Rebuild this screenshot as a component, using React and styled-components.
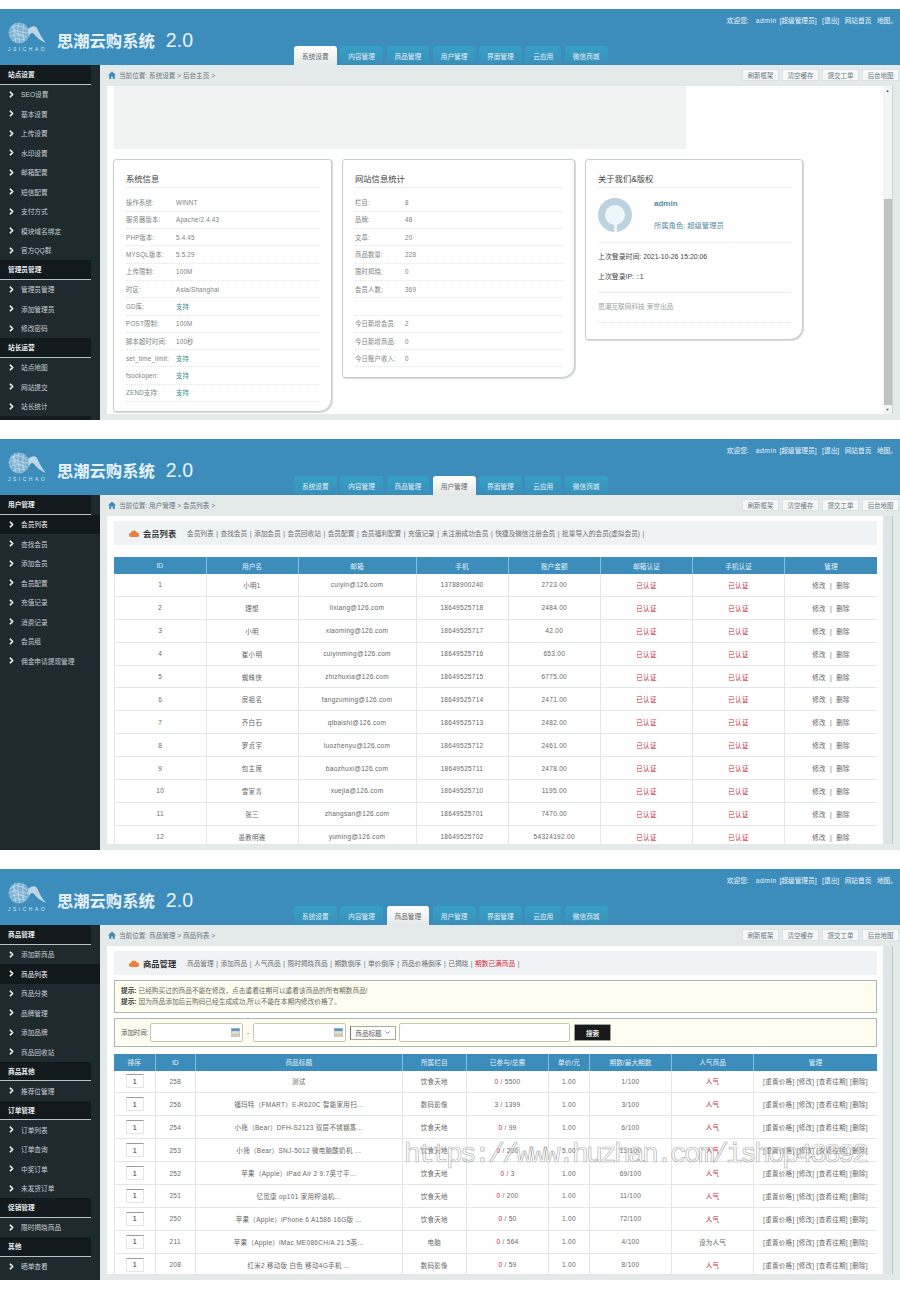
import React from 'react';
import styled, {createGlobalStyle} from 'styled-components';
import {ChevronRight, ChevronDown} from 'lucide-react';

const TABS = ['系统设置', '内容管理', '商品管理', '用户管理', '界面管理', '云应用', '微信商城'];

const SIDE_ONE = [
    {group: '站点设置', items: ['SEO设置', '基本设置', '上传设置', '水印设置', '邮箱配置', '短信配置', '支付方式', '模块域名绑定', '官方QQ群']},
    {group: '管理员管理', items: ['管理员管理', '添加管理员', '修改密码']},
    {group: '站长运营', items: ['站点地图', '网站提交', '站长统计']},
    {group: '', items: []},
];

const SIDE_TWO = [
    {group: '用户管理', items: ['会员列表', '查找会员', '添加会员', '会员配置', '充值记录', '消费记录', '会员组', '佣金申请提现管理']},
];

const SIDE_THREE = [
    {group: '商品管理', items: ['添加新商品', '商品列表', '商品分类', '品牌管理', '添加品牌', '商品回收站']},
    {group: '商品其他', items: ['推荐位管理']},
    {group: '订单管理', items: ['订单列表', '订单查询', '中奖订单', '未发货订单']},
    {group: '促销管理', items: ['限时揭晓商品']},
    {group: '其他', items: ['晒单查看']},
];

const SYSTEM_INFO = [
    ['操作系统:', 'WINNT'],
    ['服务器版本:', 'Apache/2.4.43'],
    ['PHP版本:', '5.4.45'],
    ['MYSQL版本:', '5.5.29'],
    ['上传限制:', '100M'],
    ['时区:', 'Asia/Shanghai'],
    ['GD库:', '支持', true],
    ['POST限制:', '100M'],
    ['脚本超时时间:', '100秒'],
    ['set_time_limit:', '支持', true],
    ['fsockopen:', '支持', true],
    ['ZEND支持:', '支持', true],
];

const SITE_STATS = [
    ['栏目:', '8'],
    ['品牌:', '48'],
    ['文章:', '20'],
    ['商品数量:', '228'],
    ['限时揭晓:', '0'],
    ['会员人数:', '369'],
    ['', ''],
    ['今日新增会员:', '2'],
    ['今日新增商品:', '0'],
    ['今日账户收入:', '0'],
];

const MEMBERS = [
    [1, '小明1', 'cuiyin@126.com', '13788900240', '2723.00'],
    [2, '理想', 'lixiang@126.com', '18649525718', '2484.00'],
    [3, '小明', 'xiaoming@126.com', '18649525717', '42.00'],
    [4, '崔小明', 'cuiyinming@126.com', '18649525716', '653.00'],
    [5, '蜘蛛侠', 'zhizhuxia@126.com', '18649525715', '6775.00'],
    [6, '房祖名', 'fangzuming@126.com', '18649525714', '2471.00'],
    [7, '齐白石', 'qibaishi@126.com', '18649525713', '2482.00'],
    [8, '罗贞宇', 'luozhenyu@126.com', '18649525712', '2461.00'],
    [9, '包主席', 'baozhuxi@126.com', '18649525711', '2478.00'],
    [10, '雪家青', 'xuejia@126.com', '18649525710', '1195.00'],
    [11, '张三', 'zhangsan@126.com', '18649525701', '7470.00'],
    [12, '愚教明雅', 'yuming@126.com', '18649525702', '54324192.00'],
];

const PRODUCTS = [
    [258, '测试', '饮食天地', '0', '5500', '1.00', '1/100', true],
    [256, '福玛特（FMART）E-R620C 智能家用扫...', '数码影像', '3', '1399', '1.00', '3/100', true],
    [254, '小熊（Bear）DFH-S2123 双层不锈钢蒸...', '饮食天地', '0', '99', '1.00', '6/100', true],
    [253, '小熊（Bear）SNJ-5012 微电脑酸奶机 ...', '饮食天地', '0', '200', '5.00', '13/100', true],
    [252, '苹果（Apple）iPad Air 2 9.7英寸平...', '饮食天地', '0', '3', '1.00', '69/100', true],
    [251, '亿觅康 op101 家用榨油机...', '饮食天地', '0', '200', '1.00', '11/100', true],
    [250, '苹果（Apple）iPhone 6 A1586 16G版 ...', '饮食天地', '0', '50', '1.00', '72/100', true],
    [211, '苹果（Apple）iMac ME086CH/A 21.5英...', '电脑', '0', '564', '1.00', '4/100', false],
    [208, '红米2 移动版 白色 移动4G手机 ...', '数码影像', '0', '59', '1.00', '8/100', true],
];

const MEMBER_COLS = '91.5px 92px 118px 92px 92.5px 92px 92px 93px';
const PRODUCT_COLS = '40.5px 40.5px 206.5px 64.5px 82px 41px 82px 82px 124px';

const MEMBER_LINKS = ['会员列表', '查找会员', '添加会员', '会员回收站', '会员配置', '会员福利配置', '充值记录', '未注册成功会员', '快捷及微信注册会员', '批量导入的会员(虚拟会员)'];
const PRODUCT_LINKS = ['商品管理', '添加商品', '人气商品', '限时揭晓商品', '期数倒序', '单价倒序', '商品价格倒序', '已揭晓'];

function Logo() {
    return (
        <LogoWrap>
            <LogoMark width="40" height="24" viewBox="0 0 40 24" fill="none">
                <circle cx="11" cy="11" r="10.5" fill="#7fb2d2" />
                <g stroke="#e3f0f7" strokeWidth="0.5">
                    <path d="M2 7c3-3 6-4 9-3s6 2 8 4" />
                    <path d="M1 11c3-2 6-3 9-2s7 2 11 2" />
                    <path d="M2 15c3-2 5-2 8-2s6 1 9 2" />
                    <path d="M5 19c2-2 4-3 6-2s4 1 6 0" />
                    <path d="M7 1c-2 5-1 12 1 19" />
                    <path d="M11 1c-2 5-1 12 1 20" />
                    <path d="M16 2c-2 5-1 11 0 17" />
                    <path d="M4 4c2 2 3 3 3 5s2 3 4 3 4 2 4 4" />
                </g>
                <path d="M20 7C23 4 27 3 29 6 31 10 33 15 38 21 33 19 29 16 26 12 24 10 22 11 21 15z" fill="#bcd8e8" />
            </LogoMark>
            <LogoName>JSICHAO</LogoName>
        </LogoWrap>
    );
}

function Header({active}) {
    return (
        <Top>
            <Logo />
            <Title>思潮云购系统<TitleVersion>2.0</TitleVersion></Title>
            <TopRight>
                <TopLinks>
                    <span>欢迎您:</span>
                    <TopUser>admin</TopUser>
                    <span>[超级管理员]</span>
                    <span>[退出]</span>
                    <span>网站首页</span>
                    <span>地图。</span>
                </TopLinks>
                <Tabs>
                    {TABS.map((t) => <Tab key={t} $active={t === active}>{t}</Tab>)}
                </Tabs>
            </TopRight>
        </Top>
    );
}

function Sidebar({groups, current}) {
    return (
        <Side>
            {groups.map((g, i) => (
                <div key={i}>
                    <SideGroup>{g.group}</SideGroup>
                    {g.items.map((item) => (
                        <SideItem key={item} $active={item === current}>
                            <ChevronRight size={9} strokeWidth={4.5} color="#fff" />
                            {item}
                        </SideItem>
                    ))}
                </div>
            ))}
        </Side>
    );
}

function SubBar({crumbs}) {
    return (
        <Sub>
            <Crumbs>
                <svg width="8" height="8" viewBox="0 0 8 8"><path d="M4 .5 0 4.2h1.2V8h2V5.4h1.6V8h2V4.2H8z" fill="#3c8dbc" /></svg>
                当前位置: {crumbs}
            </Crumbs>
            <SubButtons>
                {['刷新框架', '清空缓存', '提交工单', '后台地图'].map((b) => <SubButton key={b}>{b}</SubButton>)}
            </SubButtons>
        </Sub>
    );
}

function Cloud() {
    return (
        <svg width="10" height="7" viewBox="0 0 10 7"><path d="M2.2 7A2.1 2.1 0 0 1 1.9 2.8 3.2 3.2 0 0 1 7.9 2.6 2.2 2.2 0 0 1 7.9 7z" fill="#e9803c" /></svg>
    );
}

function Toolbar({title, links, extra}) {
    return (
        <Bar>
            <Cloud />
            <BarTitle>{title}</BarTitle>
            <BarLinks>
                {links.map((l) => <span key={l}>{l}<BarSep>|</BarSep></span>)}
                {extra}
            </BarLinks>
        </Bar>
    );
}

function Scrollbar({light, thumbTop, thumbHeight}) {
    return (
        <Track $light={light}>
            {light && <Arrow>▲</Arrow>}
            {light && <Thumb $top={thumbTop} $height={thumbHeight} />}
            {light && <Arrow>▼</Arrow>}
        </Track>
    );
}

function InfoRows({rows}) {
    return rows.map(([label, value, ok], i) => (
        <InfoRow key={i}>
            <InfoLabel>{label}</InfoLabel>
            <InfoValue $ok={ok}>{value}</InfoValue>
        </InfoRow>
    ));
}

function DashboardScreen() {
    return (
        <Screen>
            <Header active="系统设置" />
            <Body>
                <Sidebar groups={SIDE_ONE} />
                <Main>
                    <SubBar crumbs="系统设置 > 后台主页 >" />
                    <Panel>
                        <Inner $flush>
                            <Blank />
                            <Cards>
                                <Card $width={219} $height={253}>
                                    <CardTitle>系统信息</CardTitle>
                                    <InfoRows rows={SYSTEM_INFO} />
                                </Card>
                                <Card $width={233} $height={219}>
                                    <CardTitle>网站信息统计</CardTitle>
                                    <InfoRows rows={SITE_STATS} />
                                </Card>
                                <Card $width={218} $height={181}>
                                    <CardTitle>关于我们&版权</CardTitle>
                                    <Profile>
                                        <Avatar />
                                        <ProfileText>
                                            <ProfileName>admin</ProfileName>
                                            <ProfileRole>所属角色: 超级管理员</ProfileRole>
                                        </ProfileText>
                                    </Profile>
                                    <LoginInfo>
                                        <div>上次登录时间: 2021-10-26 15:20:06</div>
                                        <div>上次登录IP: ::1</div>
                                    </LoginInfo>
                                    <Credit>思潮互联网科技 荣誉出品</Credit>
                                </Card>
                            </Cards>
                        </Inner>
                        <Scrollbar light thumbTop={104} thumbHeight={206} />
                    </Panel>
                </Main>
            </Body>
        </Screen>
    );
}

function MemberScreen() {
    return (
        <Screen>
            <Header active="用户管理" />
            <Body>
                <Sidebar groups={SIDE_TWO} current="会员列表" />
                <Main>
                    <SubBar crumbs="用户管理 > 会员列表 >" />
                    <Panel>
                        <Inner>
                            <Toolbar title="会员列表" links={MEMBER_LINKS} />
                            <TableHead $cols={MEMBER_COLS} $gap={12}>
                                {['ID', '用户名', '邮箱', '手机', '账户金额', '邮箱认证', '手机认证', '管理'].map((h) => <HeadCell key={h}>{h}</HeadCell>)}
                            </TableHead>
                            {MEMBERS.map((m) => (
                                <TableRow key={m[0]} $cols={MEMBER_COLS}>
                                    {m.map((v, i) => <Cell key={i}>{v}</Cell>)}
                                    <Cell $red>已认证</Cell>
                                    <Cell $red>已认证</Cell>
                                    <Cell>修改&nbsp;&nbsp;|&nbsp;&nbsp;删除</Cell>
                                </TableRow>
                            ))}
                        </Inner>
                        <Scrollbar />
                    </Panel>
                </Main>
            </Body>
        </Screen>
    );
}

function DateField() {
    return (
        <DateBox>
            <svg width="9" height="9" viewBox="0 0 9 9">
                <rect width="9" height="9" fill="#d8e4ea" stroke="#7f97a6" strokeWidth=".6" />
                <rect x=".5" y=".5" width="8" height="2.6" fill="#5d95bd" />
                <rect x="1" y="5.6" width="7" height="2.6" fill="#e2c98c" />
            </svg>
        </DateBox>
    );
}

function ProductScreen() {
    return (
        <Screen>
            <Header active="商品管理" />
            <Body>
                <Sidebar groups={SIDE_THREE} current="商品列表" />
                <Main>
                    <SubBar crumbs="商品管理 > 商品列表 >" />
                    <Panel>
                        <Inner>
                            <Toolbar title="商品管理" links={PRODUCT_LINKS} extra={<span><RedText>期数已满商品</RedText><BarSep>|</BarSep></span>} />
                            <Notice>
                                <div><b>提示:</b> 已经购买过的商品不能在修改，点击重看往期可以重看该商品的所有期数商品!</div>
                                <div><b>提示:</b> 因为商品添加后云购码已经生成成功,所以不能在本期内修改价格了。</div>
                            </Notice>
                            <SearchBox>
                                <SearchLabel>添加时间:</SearchLabel>
                                <DateField />
                                <DateDash>-</DateDash>
                                <DateField />
                                <FieldSelect>
                                    商品标题
                                    <ChevronDown size={7} strokeWidth={2.5} />
                                </FieldSelect>
                                <FieldInput readOnly />
                                <SearchButton>搜索</SearchButton>
                            </SearchBox>
                            <TableHead $cols={PRODUCT_COLS} $gap={6.5}>
                                {['排序', 'ID', '商品标题', '所属栏目', '已参与/总需', '单价/元', '期数/最大期数', '人气商品', '管理'].map((h) => <HeadCell key={h}>{h}</HeadCell>)}
                            </TableHead>
                            {PRODUCTS.map((p) => (
                                <TableRow key={p[0]} $cols={PRODUCT_COLS}>
                                    <Cell><OrderInput readOnly value="1" /></Cell>
                                    <Cell>{p[0]}</Cell>
                                    <Cell>{p[1]}</Cell>
                                    <Cell>{p[2]}</Cell>
                                    <Cell>{p[3] === '0' ? <RedText>{p[3]}</RedText> : p[3]} / {p[4]}</Cell>
                                    <Cell>{p[5]}</Cell>
                                    <Cell>{p[6]}</Cell>
                                    <Cell $red={p[7]}>{p[7] ? '人气' : '设为人气'}</Cell>
                                    <Cell>[重置价格] [修改] [查看往期] [删除]</Cell>
                                </TableRow>
                            ))}
                        </Inner>
                        <Scrollbar />
                    </Panel>
                </Main>
            </Body>
        </Screen>
    );
}

export default function App() {
    return (
        <Page>
            <GlobalStyle />
            <DashboardScreen />
            <MemberScreen />
            <ProductScreen />
            <Watermark>https://www.huzhan.com/ishop43892</Watermark>
        </Page>
    );
}

const GlobalStyle = createGlobalStyle`
    html, body {
        margin: 0;
        padding: 0;
        background: #fff;
    }
    * {
        box-sizing: border-box;
    }
`;

const Page = styled.div`
    position: relative;
    width: 900px;
    height: 1290px;
    padding-top: 9px;
    display: flex;
    flex-direction: column;
    gap: 19px;
    overflow: hidden;
    font-family: "Liberation Sans", "Noto Sans CJK SC", sans-serif;
    font-size: 6.7px;
    color: #555;
`;

const Watermark = styled.div`
    position: absolute;
    left: 404px;
    top: 1139px;
    font-family: "Liberation Mono", monospace;
    font-size: 28px;
    letter-spacing: -2.8px;
    white-space: nowrap;
    color: rgba(255, 255, 255, 0.5);
    -webkit-text-stroke: 0.7px rgba(120, 120, 120, 0.6);
`;

const Screen = styled.section`
    height: 411px;
    display: flex;
    flex-direction: column;
    overflow: hidden;
`;

const Top = styled.header`
    height: 56px;
    flex: none;
    display: flex;
    background: #3c8dbc;
    color: #fff;
`;

const LogoWrap = styled.div`
    width: 57px;
    padding: 13px 0 0 8px;
`;

const LogoMark = styled.svg`
    display: block;
`;

const LogoName = styled.div`
    font-size: 5px;
    line-height: 6px;
    letter-spacing: 2.5px;
    color: #d8e9f3;
    white-space: nowrap;
`;

const Title = styled.h1`
    width: 237px;
    margin: 0;
    padding-top: 20px;
    font-size: 16.3px;
    line-height: 22px;
    font-weight: 700;
    color: #e8f3f9;
    white-space: nowrap;
`;

const TitleVersion = styled.span`
    margin-left: 11px;
    font-size: 19.5px;
    font-weight: 400;
    letter-spacing: 0.2px;
`;

const TopRight = styled.div`
    flex: 1;
    display: flex;
    flex-direction: column;
    justify-content: space-between;
`;

const TopLinks = styled.div`
    padding: 7px 3px 0 0;
    display: flex;
    justify-content: flex-end;
    gap: 5.5px;
    line-height: 9px;
    color: #eef6fa;
`;

const TopUser = styled.span`
    margin-left: 1.5px;
    margin-right: -3px;
    letter-spacing: 0.6px;
`;

const Tabs = styled.nav`
    display: flex;
    gap: 3.5px;
`;

const Tab = styled.div`
    height: 19px;
    padding: 0 8px;
    display: flex;
    align-items: center;
    border-radius: 3px 3px 0 0;
    background: ${(p) => (p.$active ? 'linear-gradient(#fff, #e4e9ea)' : 'linear-gradient(#36a0c6, #3a8fba)')};
    color: ${(p) => (p.$active ? '#666' : '#e4f1f6')};
`;

const Body = styled.div`
    flex: 1;
    min-height: 0;
    display: flex;
`;

const Side = styled.aside`
    width: 100px;
    flex: none;
    overflow: hidden;
    background: #1f2a2f;
`;

const SideGroup = styled.div`
    width: 91px;
    height: 19.5px;
    padding-left: 8px;
    display: flex;
    align-items: center;
    background: #131a1e;
    border-bottom: 1px solid #b9c2c6;
    font-weight: 700;
    color: #e9eef0;
`;

const SideItem = styled.div`
    height: 19.5px;
    padding-left: 7px;
    display: flex;
    align-items: center;
    gap: 5px;
    background: ${(p) => (p.$active ? '#12191d' : 'transparent')};
    color: ${(p) => (p.$active ? '#f2f5f6' : '#c6cfd3')};
`;

const Main = styled.div`
    flex: 1;
    min-width: 0;
    display: flex;
    flex-direction: column;
    background: #e4e9ea;
`;

const Sub = styled.div`
    height: 20.5px;
    flex: none;
    display: flex;
    align-items: center;
    justify-content: space-between;
`;

const Crumbs = styled.div`
    padding-left: 8px;
    display: flex;
    align-items: center;
    gap: 3px;
    font-size: 6.6px;
    color: #68767d;
`;

const SubButtons = styled.div`
    display: flex;
    gap: 3px;
    padding-right: 1px;
`;

const SubButton = styled.div`
    width: 37px;
    height: 12px;
    display: flex;
    align-items: center;
    justify-content: center;
    background: #f5f7f8;
    border: 1px solid #dde2e4;
    color: #66767f;
    font-size: 6.4px;
`;

const Panel = styled.div`
    flex: 1;
    min-height: 0;
    margin: 0 7px 6px 7px;
    display: flex;
    background: #fff;
`;

const Inner = styled.div`
    flex: 1;
    min-width: 0;
    overflow: hidden;
    padding: ${(p) => (p.$flush ? '0 0 0 6px' : '5.5px 6px 0 7px')};
`;

const Track = styled.div`
    width: 10px;
    flex: none;
    display: flex;
    flex-direction: column;
    align-items: center;
    background: ${(p) => (p.$light ? '#f3f5f5' : '#dfe5e7')};
    border-right: 1px solid ${(p) => (p.$light ? '#cfd6d8' : '#bcc7cb')};
`;

const Arrow = styled.div`
    height: 9px;
    flex: none;
    font-size: 4px;
    line-height: 9px;
    color: #555;
    &:last-child {
        margin-top: auto;
    }
`;

const Thumb = styled.div`
    width: 8px;
    margin-top: ${(p) => p.$top}px;
    height: ${(p) => p.$height}px;
    flex: none;
    background: #bfc1c1;
`;

const Blank = styled.div`
    width: 572px;
    height: 63px;
    margin-left: 1px;
    background: #f1f2f2;
`;

const Cards = styled.div`
    margin-top: 10.5px;
    display: flex;
    align-items: flex-start;
    gap: 10px;
`;

const Card = styled.div`
    width: ${(p) => p.$width}px;
    height: ${(p) => p.$height}px;
    padding: 0 11px 0 12px;
    background: #fff;
    border: 1px solid #c9cdce;
    border-radius: 3px 3px 13px 3px;
    box-shadow: 1px 1px 1px #d5d8d9;
`;

const CardTitle = styled.h3`
    height: 28px;
    margin: 0 0 6.5px;
    padding-top: 13px;
    font-size: 8.3px;
    line-height: 12px;
    font-weight: 400;
    color: #444;
    border-bottom: 1px solid #eceeee;
`;

const InfoRow = styled.div`
    height: 17.3px;
    display: flex;
    align-items: center;
    border-bottom: 1px dotted #e4e6e6;
    font-size: 6.3px;
    letter-spacing: 0.2px;
    color: #7a7f82;
`;

const InfoLabel = styled.span`
    width: 50px;
    flex: none;
    white-space: nowrap;
`;

const InfoValue = styled.span`
    color: ${(p) => (p.$ok ? '#2f8f8f' : '#7a7f82')};
`;

const Profile = styled.div`
    height: 48px;
    display: flex;
    border-bottom: 1px dotted #e4e6e6;
`;

const Avatar = styled.div`
    position: relative;
    width: 34px;
    height: 34px;
    margin-top: 3px;
    flex: none;
    border-radius: 50%;
    background: #eef6fa;
    border: 7px solid #bdd3df;
    &::after {
        content: '';
        position: absolute;
        left: 8.5px;
        bottom: -7px;
        width: 3px;
        height: 8px;
        background: #eef6fa;
    }
`;

const ProfileText = styled.div`
    margin-left: 22px;
    padding-top: 4px;
    color: #4f8aa6;
    font-size: 7.3px;
`;

const ProfileName = styled.div`
    font-weight: 700;
    font-size: 8px;
    line-height: 10px;
`;

const ProfileRole = styled.div`
    margin-top: 12px;
    line-height: 10px;
    white-space: nowrap;
`;

const LoginInfo = styled.div`
    height: 50px;
    padding-top: 9px;
    display: flex;
    flex-direction: column;
    gap: 10px;
    border-bottom: 1px solid #e8eaea;
    font-size: 6.9px;
    line-height: 10px;
    color: #444;
`;

const Credit = styled.div`
    height: 30px;
    padding-top: 9px;
    border-bottom: 1px dotted #dcdede;
    font-size: 6.7px;
    line-height: 10px;
    color: #9a9fa2;
`;

const Bar = styled.div`
    height: 24px;
    display: flex;
    align-items: center;
    padding-left: 15px;
    background: #f0f3f5;
`;

const BarTitle = styled.strong`
    width: 44px;
    margin-left: 4px;
    flex: none;
    font-size: 8.3px;
    color: #333;
`;

const BarLinks = styled.div`
    white-space: nowrap;
    color: #6a7074;
    font-size: 6.7px;
`;

const BarSep = styled.span`
    margin: 0 2.5px;
`;

const RedText = styled.span`
    color: #cf2a3a;
`;

const Notice = styled.div`
    height: 33px;
    margin-top: 5px;
    padding: 5px 6px;
    display: flex;
    flex-direction: column;
    gap: 2px;
    background: #fffdf0;
    border: 1px solid #a6b8b4;
    line-height: 9px;
    color: #6a6a60;
    b {
        color: #333;
    }
`;

const SearchBox = styled.div`
    height: 29px;
    margin-top: 5px;
    padding: 0 6px;
    display: flex;
    align-items: center;
    background: #fffdf0;
    border: 1px solid #a6b8b4;
    color: #555;
    font-size: 6.4px;
`;

const SearchLabel = styled.span`
    width: 29px;
    flex: none;
    white-space: nowrap;
`;

const DateBox = styled.div`
    width: 93px;
    height: 18.5px;
    padding-right: 2px;
    display: flex;
    align-items: center;
    justify-content: flex-end;
    background: #fff;
    border: 1px solid #c9c7b5;
    border-radius: 2px;
    flex: none;
`;

const DateDash = styled.span`
    width: 10px;
    flex: none;
    text-align: center;
`;

const FieldSelect = styled.div`
    width: 46px;
    height: 14px;
    margin: 0 3px 0 4px;
    flex: none;
    display: flex;
    align-items: center;
    justify-content: center;
    gap: 2px;
    background: #fff;
    border: 1px solid #a9a99e;
    border-left-color: #77776e;
    font-size: 6.6px;
    color: #555;
`;

const FieldInput = styled.input`
    width: 171px;
    height: 18.5px;
    background: #fff;
    border: 1px solid #c9c7b5;
    border-radius: 2px;
`;

const SearchButton = styled.button`
    width: 37px;
    height: 17px;
    margin-left: 4px;
    padding: 0;
    background: #17191b;
    border: 1px solid #9aa0a2;
    border-radius: 1px;
    color: #e8e8e8;
    font-family: inherit;
    font-size: 6.6px;
    font-weight: 700;
`;

const TableHead = styled.div`
    height: 17px;
    margin-top: ${(p) => p.$gap}px;
    display: grid;
    grid-template-columns: ${(p) => p.$cols};
    background: #3c8dbc;
    color: #e6f1f7;
`;

const HeadCell = styled.div`
    display: flex;
    align-items: center;
    justify-content: center;
    border-left: 1px solid #8bbcd8;
    &:first-child {
        border-left: none;
    }
`;

const TableRow = styled.div`
    height: 22.9px;
    display: grid;
    grid-template-columns: ${(p) => p.$cols};
    border-bottom: 1px solid #e4e7e9;
    background: #fff;
`;

const Cell = styled.div`
    display: flex;
    align-items: center;
    justify-content: center;
    white-space: pre;
    overflow: hidden;
    border-left: 1px solid #e4e7e9;
    font-size: 6.5px;
    letter-spacing: 0.3px;
    color: ${(p) => (p.$red ? '#c22d3e' : '#666')};
`;

const OrderInput = styled.input`
    width: 18px;
    height: 14px;
    padding: 0;
    text-align: center;
    font-family: inherit;
    font-size: 8px;
    color: #444;
    background: #fff;
    border: 1px solid #e2e4e5;
    border-top: 1px solid #9a9d9e;
`;
